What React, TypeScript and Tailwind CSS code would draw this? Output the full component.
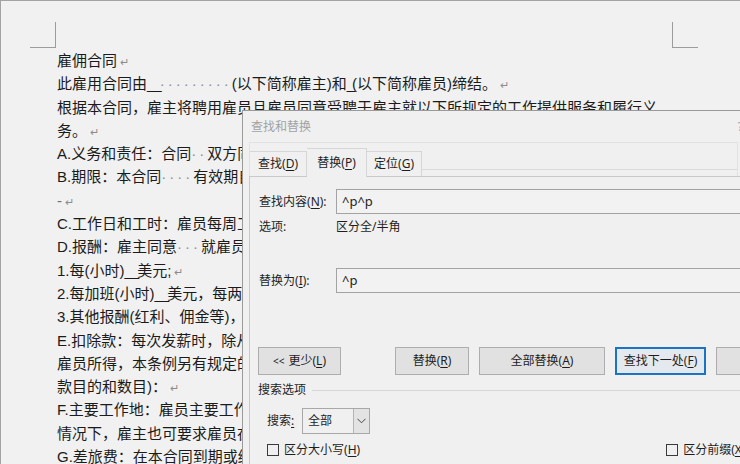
import React from "react"

// paragraph mark shown by Word
const Mark = () => <span className="ml-[3px] text-[11px] text-[#8c8c8c]">↵</span>

// space markers
const Dots = ({ n }: { n: number }) => (
  <span className="text-[#8f8f8f] tracking-[3px]">{"·".repeat(n)}</span>
)

const Key = ({ k }: { k: string }) => (
  <>
    (<span className="underline underline-offset-2">{k}</span>)
  </>
)

function Document() {
  return (
    <div className="text-[15px] leading-[23.3px] text-[#1b1b1b] font-['Liberation_Sans','Noto_Sans_CJK_SC',sans-serif]">
      {/* page corner marks */}
      <div className="flex justify-between pt-[21px] pl-[29px] pr-[42px]">
        <div className="w-[26px] h-[26px] border-r border-b border-[#9c9c9c]" />
        <div className="w-[26px] h-[26px] border-l border-b border-[#9c9c9c]" />
      </div>
      <div className="pl-[56px] pt-[1px] whitespace-nowrap [&>div]:h-[23.3px]">
        <div>雇佣合同<Mark /></div>
        <div>
          此雇用合同由<span className="tracking-[-2px]">__</span><Dots n={9} />(以下简称雇主)和<span className="tracking-[-3px]">_</span>(以下简称雇员)缔结。<Mark />
        </div>
        <div>根据本合同，雇主将聘用雇员且雇员同意受聘于雇主就以下所规定的工作提供服务和履行义</div>
        <div>务。<Mark /></div>
        <div>A.义务和责任：合同<Dots n={2} />双方同意按本合同规定履行各自的义务和责任。</div>
        <div>B.期限：本合同<Dots n={4} />有效期自签订之日起生效。</div>
        <div><span className="text-[#6f6f6f]">-</span><Mark /></div>
        <div>C.工作日和工时：雇员每周工作五天，每天八小时。</div>
        <div>D.报酬：雇主同意<Dots n={3} />就雇员提供的服务支付报酬。</div>
        <div>1.每(小时)<span className="tracking-[-2px]">__</span>美元;<Mark /></div>
        <div>2.每加班(小时)<span className="tracking-[-2px]">__</span>美元，每两周支付一次。</div>
        <div>3.其他报酬(红利、佣金等)，按约定支付。</div>
        <div>E.扣除款：每次发薪时，除从薪水中扣除法定款项外，</div>
        <div>雇员所得，本条例另有规定的除外(请注明</div>
        <div>款目的和数目)：<Mark /></div>
        <div>F.主要工作地：雇员主要工作地点为雇主所在地，</div>
        <div>情况下，雇主也可要求雇员在其他地点工作。</div>
        <div>G.差旅费：在本合同到期或终止时，雇主负担费用。</div>
      </div>
    </div>
  )
}

function Button({ children, w, primary }: { children: React.ReactNode; w: string; primary?: boolean }) {
  return (
    <div
      className={`${w} shrink-0 h-[28px] flex items-center justify-center ${
        primary ? "border-2 border-[#1a73c4] bg-[#e4e9ef]" : "border border-[#adadad] bg-[#e1e1e1]"
      }`}
    >
      {children}
    </div>
  )
}

function FindReplaceDialog() {
  return (
    <div className="absolute left-[241px] top-[109px] w-[530px] h-[400px] border border-[#9a9a9a] bg-[#f0f0f0] text-[12px] text-[#1e1e1e] font-['Noto_Sans','Noto_Sans_CJK_SC',sans-serif]">
      {/* title bar */}
      <div className="h-[31px] flex items-center pl-[8px] pr-[28px] text-[#a2a2a2]">
        <span>查找和替换</span>
        <span className="ml-auto">?</span>
      </div>

      <div className="pl-[6px]">
        {/* tab strip */}
        <div className="w-[489px] h-[34px] flex items-end border-t border-l border-r border-[#e2e2e2]">
          <div className="w-[57px] h-[25px] flex items-center justify-center border-t border-r border-[#d6d6d6]">
            查找<Key k="D" />
          </div>
          <div className="relative z-10 -mb-px w-[60px] h-[29px] flex items-center justify-center border-t border-r border-[#d6d6d6] bg-[#f0f0f0]">
            替换<Key k="P" />
          </div>
          <div className="w-[55px] h-[25px] flex items-center justify-center border-t border-r border-[#d6d6d6]">
            定位<Key k="G" />
          </div>
          <div className="flex-1 self-stretch border-b border-[#dadada] mb-[6px]" />
        </div>

        {/* panel */}
        <div className="w-[520px] border-t border-l border-[#c9c9c9] pl-[9px] pt-[12px]">
          <div className="flex items-center h-[25px]">
            <div className="w-[77px] shrink-0">查找内容<Key k="N" />:</div>
            <div className="flex-1 h-[25px] border border-[#a3a3a3] bg-[#f2f2f2] flex items-center pl-[5px] text-[13px]">^p^p</div>
          </div>
          <div className="flex items-center h-[26px]">
            <div className="w-[77px] shrink-0">选项:</div>
            <div>区分全/半角</div>
          </div>
          <div className="flex items-center h-[25px] mt-[28px]">
            <div className="w-[77px] shrink-0">替换为<Key k="I" />:</div>
            <div className="flex-1 h-[25px] border border-[#a3a3a3] bg-[#f2f2f2] flex items-center pl-[5px] text-[13px]">^p</div>
          </div>

          {/* buttons */}
          <div className="flex mt-[54px] -ml-[1px]">
            <Button w="w-[83px]">
              <span className="text-[10px] mr-[4px]">&lt;&lt;</span>更少<Key k="L" />
            </Button>
            <div className="ml-[54px] shrink-0">
              <Button w="w-[74px]">替换<Key k="R" /></Button>
            </div>
            <div className="ml-[10px] shrink-0">
              <Button w="w-[126px]">全部替换<Key k="A" /></Button>
            </div>
            <div className="ml-[10px] shrink-0">
              <Button w="w-[91px]" primary>查找下一处<Key k="F" /></Button>
            </div>
            <div className="ml-[10px] shrink-0">
              <Button w="w-[80px]">取消</Button>
            </div>
          </div>

          {/* search options */}
          <div className="flex items-center h-[30px] -ml-[1px]">
            <span>搜索选项</span>
            <div className="flex-1 ml-[6px] border-t border-[#d7d7d7]" />
          </div>
          <div className="flex items-center h-[26px] mt-[3px] pl-[8px]">
            <span className="w-[35px] shrink-0">
              搜索<span className="underline underline-offset-2">:</span>
            </span>
            <div className="w-[68px] h-[26px] border border-[#a8a8a8] flex">
              <div className="flex-1 flex items-center pl-[5px]">全部</div>
              <div className="w-[16px] border-l border-[#b4b4b4] bg-[#e3e3e3] flex items-center justify-center">
                <svg width="9" height="6" viewBox="0 0 9 6" fill="none" stroke="#444" strokeWidth="1">
                  <path d="M0.5 0.8 L4.5 4.8 L8.5 0.8" />
                </svg>
              </div>
            </div>
          </div>
          <div className="flex items-center h-[32px] pl-[8px]">
            <div className="w-[12px] h-[12px] shrink-0 border border-[#3a3a3a]" />
            <span className="ml-[5px] shrink-0">区分大小写<Key k="H" /></span>
            <div className="ml-[306px] w-[12px] h-[12px] shrink-0 border border-[#3a3a3a]" />
            <span className="ml-[5px] shrink-0">区分前缀<Key k="X" /></span>
          </div>
        </div>
      </div>
    </div>
  )
}

export default function App() {
  return (
    <div className="relative w-[740px] h-[464px] overflow-hidden bg-[#f1f1f1] border-t border-l border-[#a3a3a3]">
      <Document />
      <FindReplaceDialog />
    </div>
  )
}
